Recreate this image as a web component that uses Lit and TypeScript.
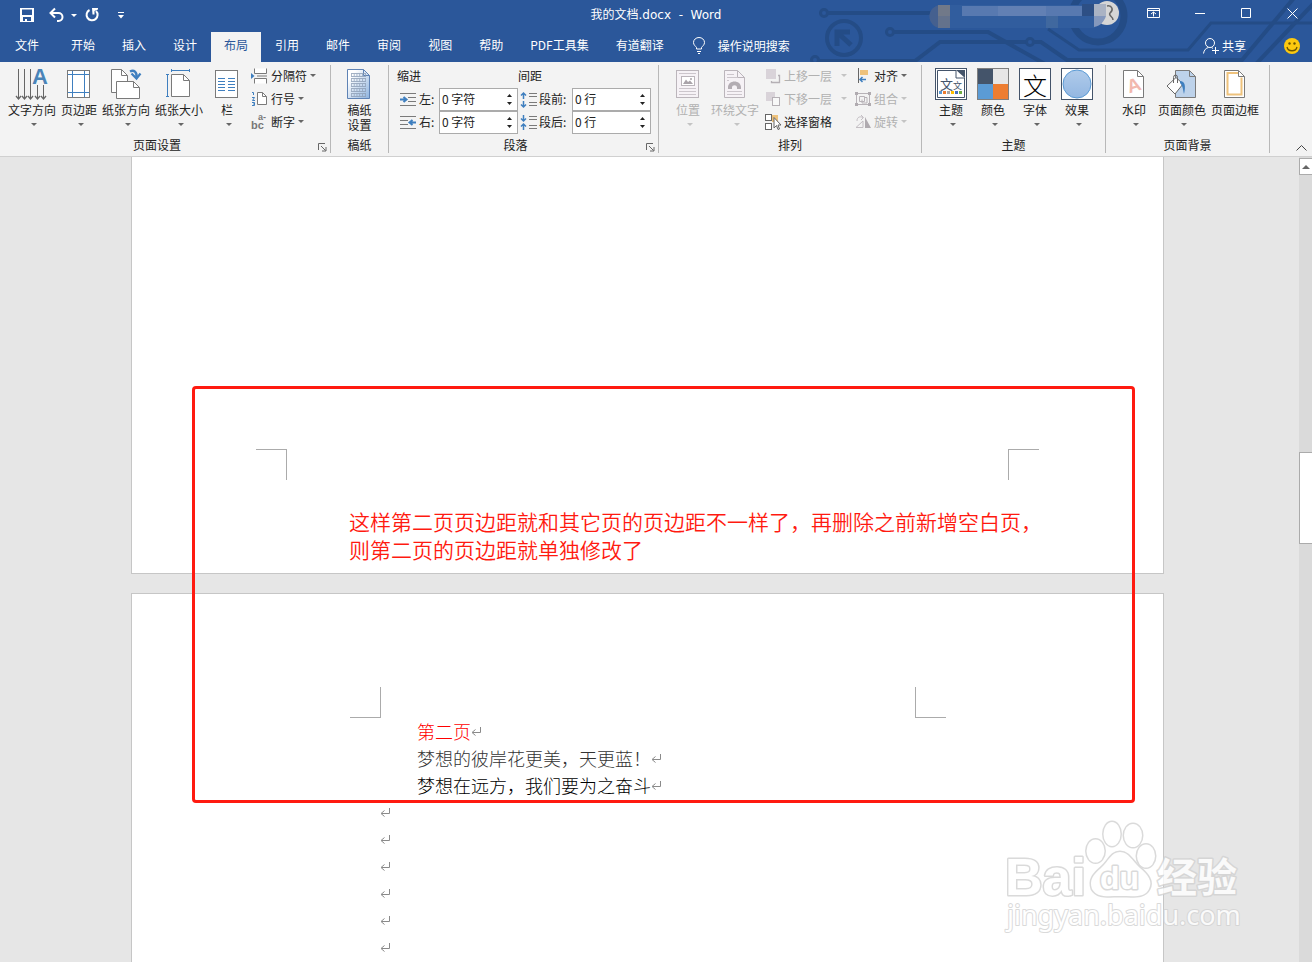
import { LitElement, html, svg, css, nothing, TemplateResult } from "lit";
import { customElement } from "lit/decorators.js";
import { classMap } from "lit/directives/class-map.js";

const icon = (w: number, h: number, body: unknown) =>
  html`<svg width=${w} height=${h} viewBox="0 0 ${w} ${h}" aria-hidden="true">${body}</svg>`;

const caret = (color = "#666") => icon(6, 3, svg`<path d="M0 0H6L3 3Z" fill=${color} />`);
const returnMark = () =>
  icon(11, 11, svg`<path d="M9.500 1V6.500H1.500M4.500 3.500L1 6.500L4.500 9.500" fill="none" stroke="#8a8a8a" />`);

const sheet = (x: number, y: number, w: number, h: number, f: number, stroke = "#7a7a7a", fill = "#fff") => svg`
  <path d="M${x} ${y}H${x + w - f}L${x + w} ${y + f}V${y + h}H${x}Z" fill=${fill} stroke=${stroke} />
  <path d="M${x + w - f} ${y}V${y + f}H${x + w}" fill="none" stroke=${stroke} />`;

const I = {
  save: icon(14, 14, svg`<path fill="#fff" fill-rule="evenodd" d="M0 0H14V14H0ZM2 1.500V7H12V1.500ZM3 9V13H5V11H7V13H11V9Z" />`),
  undo: icon(15, 14, svg`<path d="M2 5H9.500A4 4 0 0 1 9.500 13H8" fill="none" stroke="#fff" stroke-width="2" /><path d="M6 .5L1.500 5L6 9.500" fill="none" stroke="#fff" stroke-width="2" />`),
  redo: icon(14, 14, svg`<path d="M4.500 2A5.500 5.500 0 1 0 11 3" fill="none" stroke="#fff" stroke-width="2" /><path d="M7 0H13V1.500L9.500 3V6.500H7.500Z" fill="#fff" />`),
  custom: icon(6, 7, svg`<path d="M0 .5H6" stroke="#fff" /><path d="M0 3H6L3 6.500Z" fill="#fff" />`),
  bulb: icon(12, 17, svg`<path d="M3.500 12V10.500C2.500 9 .5 8 .5 5.500A5.500 5 0 0 1 11.500 5.500C11.500 8 9.500 9 8.500 10.500V12ZM4 14.500H8M5 16.500H7" fill="none" stroke="#fff" />`),
  share: icon(16, 16, svg`<circle cx="7" cy="5" r="4.500" fill="none" stroke="#fff" /><path d="M.5 15.500C1 12 3 10 5.500 9.500M8.500 9.500L10 10.500M12.500 9V16M9 12.500H16" fill="none" stroke="#fff" />`),
  smile: icon(16, 16, svg`<circle cx="8" cy="8" r="8" fill="#fdc90f" /><circle cx="5.500" cy="5.500" r="1.200" fill="#6b5500" /><circle cx="10.500" cy="5.500" r="1.200" fill="#6b5500" /><path d="M3 9C4 14 12 14 13 9" fill="none" stroke="#6b5500" stroke-width="1.300" />`),
  display: icon(13, 10, svg`<path d="M.5 .5H12.500V9.500H.5ZM.5 2.500H12.500M6.500 8.500V4M4 6L6.500 4L9 6" fill="none" stroke="#fff" />`),
  min: icon(11, 11, svg`<path d="M0 5.500H10" stroke="#fff" />`),
  max: icon(11, 11, svg`<path d="M.5 .5H9.500V9.500H.5Z" fill="none" stroke="#fff" />`),
  close: icon(11, 11, svg`<path d="M.5 .5L10.500 10.500M10.500 .5L.5 10.500" stroke="#fff" />`),

  textDir: icon(32, 32, svg`<path d="M2.500 1V30M8.500 1V30M14.500 1V30M21.500 17V30M27.500 17V30" stroke="#666" />
    <path d="M0 28L2.500 31L5 28M6 28L8.500 31L11 28M12 28L14.500 31L17 28M19 28L21.500 31L24 28M25 28L27.500 31L30 28" fill="none" stroke="#666" stroke-width="1.300" />
    <text x="16" y="16" font-family="Liberation Sans" font-size="22" font-weight="700" fill="#4a84b8">A</text>`),
  margins: icon(24, 32, svg`<rect x=".5" y="2.500" width="22" height="27" fill="#fff" stroke="#7a7a7a" /><path d="M5.500 3V29M17.500 3V29M1 6.500H22M1 24.500H22" stroke="#3f7fbf" />`),
  orient: icon(30, 32, svg`${sheet(0.5, 1.5, 16, 23, 6)}${sheet(5.5, 13.5, 23, 17, 6)}
    <path d="M19 3.500C23 1.500 26 4 25.500 9" fill="none" stroke="#3f7fbf" stroke-width="2.500" /><path d="M20.500 5.500L25.500 10.500L29.500 5.500" fill="none" stroke="#3f7fbf" stroke-width="2.200" />`),
  size: icon(26, 32, svg`${sheet(5.5, 6.5, 18, 22, 6)}<path d="M1.500 6V29M0 6.500H3M0 28.500H3M5 2.500H24M5.500 1V4M23.500 1V4" stroke="#3f7fbf" />`),
  cols: icon(24, 32, svg`<rect x=".5" y="2.500" width="22" height="27" fill="#fff" stroke="#7a7a7a" /><path d="M3 10.500H10M3 13.500H10M3 16.500H10M3 19.500H10M3 22.500H10M13 10.500H20M13 13.500H20M13 16.500H20M13 19.500H20M13 22.500H20" stroke="#3f7fbf" />`),
  breaks: icon(17, 16, svg`<path d="M3.500 .5V5.500H15.500V.5M3.500 15.500V10.500H15.500V15.500" fill="#fff" stroke="#7a7a7a" /><path d="M6 8H16" stroke="#7a7a7a" /><path d="M0 5V11L3.500 8Z" fill="#3f7fbf" />`),
  lines: icon(17, 16, svg`${sheet(6.5, 1.5, 9, 12, 4)}<path d="M1 1.500H2.500V4M1 6.500H3.500L1.500 9.500H4M1 11.500H3.500V14.500H1M2 13H3" fill="none" stroke="#3f7fbf" />`),
  hyphen: icon(17, 16, svg`<g font-family="Liberation Sans" font-weight="700" fill="#777"><text x="0" y="15" font-size="11">bc</text><text x="7" y="6" font-size="9">a-</text></g>`),
  manuscript: icon(24, 32, svg`<defs><linearGradient id="g" x2="1" y2="1"><stop offset="0.200" stop-color="#fff" /><stop offset="1" stop-color="#8cb2de" /></linearGradient></defs>
    ${sheet(0.5, 1.5, 22, 29, 6, "#5f83b5", "url(#g)")}
    ${[5, 10, 15, 20, 25].map((y) => svg`<path d="M4 ${y + 0.5}H19M4 ${y + 3.5}H19" stroke="#8c9db5" stroke-width="0.800" /><path d="M4 ${y + 2}H19" stroke="#8c9db5" stroke-width="2" stroke-dasharray="0.700 2.100" />`)}`),
  indentL: icon(17, 13, svg`<path d="M0 .5H16M8 4.500H16M8 8.500H16M0 12.500H16" stroke="#7a7a7a" /><path d="M0 6.500H6M3.500 4L6.500 6.500L3.500 9" fill="none" stroke="#3f7fbf" stroke-width="2" />`),
  indentR: icon(17, 13, svg`<path d="M0 .5H16M0 4.500H8M0 8.500H8M0 12.500H16" stroke="#7a7a7a" /><path d="M10 6.500H16M12.500 4L9.500 6.500L12.500 9" fill="none" stroke="#3f7fbf" stroke-width="2" />`),
  before: icon(16, 16, svg`<path d="M8 1.500H16M8 4.500H16M8 10.500H16M8 13.500H16" stroke="#7a7a7a" /><path d="M2.500 1V7M2.500 9V15M0 3.500L2.500 1L5 3.500M0 12.500L2.500 15L5 12.500" fill="none" stroke="#3f7fbf" stroke-width="1.500" />`),
  after: icon(16, 16, svg`<path d="M8 1.500H16M8 4.500H16M8 10.500H16M8 13.500H16" stroke="#7a7a7a" /><path d="M2.500 0V6M2.500 9V15M0 3.500L2.500 6L5 3.500M0 11.500L2.500 9L5 11.500" fill="none" stroke="#3f7fbf" stroke-width="1.500" />`),
  position: icon(24, 32, svg`<rect x=".5" y="2.500" width="22" height="27" fill="#f6f2f6" stroke="#bbb5bb" /><path d="M3 5.500H20M3 20.500H20M3 23.500H20M3 26.500H20" stroke="#ccc6cc" /><rect x="5.500" y="8.500" width="13" height="9" fill="#fff" stroke="#bbb5bb" /><path d="M7 16L10 11.500L12 14L14 12.500L17 16Z" fill="#a9a3a9" /><circle cx="15" cy="11" r="1" fill="#a9a3a9" />`),
  wrap: icon(24, 32, svg`${sheet(1.5, 2.5, 20, 27, 7, "#bbb5bb", "#f6f2f6")}<path d="M4 6.500H11M4 9.500H14M4 12.500H6M4 26.500H19M4 23.500H19" stroke="#ccc6cc" /><path d="M5 21V19.500C5 11.500 18 11.500 18 19.500V21H14V19.500C14 16.500 9 16.500 9 19.500V21Z" fill="#b3adb3" />`),
  forward: icon(16, 16, svg`<rect x="1" y="1" width="10" height="10" fill="#d9d3d9" /><path d="M13 7.500H14.500V14.500H6.500V13" fill="none" stroke="#b5b0b5" stroke-width="1.300" />`),
  backward: icon(16, 16, svg`<rect x="1" y="1" width="9" height="9" fill="#d9d3d9" /><rect x="7.500" y="6.500" width="7" height="8" fill="#f8f8f8" stroke="#b5b0b5" />`),
  pane: icon(16, 16, svg`<rect x=".5" y=".5" width="6" height="6" fill="#fff" stroke="#666" /><rect x=".5" y="9.500" width="6" height="6" fill="#fff" stroke="#666" /><path d="M7 1H13V8H7Z" fill="#eec27c" /><path d="M9 3.500V14L11.500 11.500L13 15.500L14.500 15L13 11H16Z" fill="#fff" stroke="#666" />`),
  align: icon(16, 16, svg`<path d="M3.500 0V15" stroke="#666" /><rect x="5" y="2" width="8" height="5" fill="#eec27c" /><path d="M5 11.500H11M7.500 9L5 11.500L7.500 14" fill="none" stroke="#3f7fbf" stroke-width="1.500" />`),
  group: icon(16, 16, svg`<path d="M2 2.500H14M2 13.500H14M1.500 2V14M14.500 2V14M4.500 5.500H9.500V10.500H4.500ZM7 8.500V12H12V6.500H9.500" fill="none" stroke="#b8b3b8" /><path d="M0 1H3V4H0ZM13 1H16V4H13ZM0 12H3V15H0ZM13 12H16V15H13Z" fill="#b0abb0" />`),
  rotate: icon(16, 16, svg`<path d="M1 13.500H8V7Z" fill="none" stroke="#c3bec3" /><path d="M10 3V14H16Z" fill="#b0abb0" /><path d="M2 7C2 3 5 2 8 3.500M6 1L8.500 3.500L6 6" fill="none" stroke="#c3bec3" />`),
  theme: icon(32, 32, svg`<rect x=".5" y=".5" width="31" height="31" fill="#fff" stroke="#44546a" /><path d="M2.500 2.500H21L29.500 10V29.500H2.500Z" fill="#fff" stroke="#44546a" /><path d="M21 2H30V11Z" fill="#44546a" /><path d="M21 2V10H30" fill="#fff" stroke="#44546a" /><g font-family="Noto Sans CJK SC" fill="#44546a"><text x="5" y="21" font-size="13">文</text><text x="18" y="21" font-size="9">文</text></g>
    ${["#5b9bd5", "#ed7d31", "#a5a5a5", "#ffc000", "#4472c4", "#70ad47"].map((c, i) => svg`<rect x=${4 + i * 4} y="23" width="3" height="3" fill=${c} />`)}`),
  colors: icon(32, 32, svg`<path d="M0 0H16V16H0Z" fill="#44546a" /><path d="M16 0H32V16H16Z" fill="#e7e6e6" /><path d="M0 16H16V32H0Z" fill="#5b9bd5" /><path d="M16 16H32V32H16Z" fill="#ed7d31" /><rect x=".5" y=".5" width="31" height="31" fill="none" stroke="#7f7f7f" />`),
  fonts: icon(32, 32, svg`<rect x=".5" y=".5" width="31" height="31" fill="#fff" stroke="#44546a" /><text x="4" y="27" font-family="Noto Sans CJK SC" font-size="24" font-weight="300" fill="#000">文</text>`),
  effects: icon(32, 32, svg`<defs><linearGradient id="e" x2="0" y2="1"><stop offset="0" stop-color="#b0cbea" /><stop offset="1" stop-color="#93b7e2" /></linearGradient></defs><rect x=".5" y=".5" width="31" height="31" fill="#fff" stroke="#44546a" /><circle cx="16" cy="16" r="14" fill="url(#e)" stroke="#5b9bd5" />`),
  watermark: icon(22, 32, svg`${sheet(0.5, 2.5, 20, 27, 6)}<text x="4" y="24" font-family="Liberation Sans" font-size="19" font-weight="700" fill="#f2b8ae" transform="rotate(-18 10 18)">A</text>`),
  pageColor: icon(32, 32, svg`${sheet(9.500, 2.500, 20, 27, 6, "#7a7a7a", "#bdd2ea")}<path d="M1 18L10 9.500L17 16L9 26Z" fill="#fff" stroke="#666" /><path d="M7.500 15V9.500A2 2.500 0 0 1 11.500 9.500V15" fill="none" stroke="#666" /><path d="M14 13C19 13 20 18 18 26C17 22 17 18 14 15Z" fill="#3f7fbf" />`),
  pageBorder: icon(22, 32, svg`${sheet(0.5, 2.5, 20, 27, 6)}<path d="M14 5H3.500V26.500H17.500V9.500" fill="none" stroke="#eec27c" stroke-width="2" />`),
  launch: icon(9, 9, svg`<path d="M.5 7V.5H7M3 3L7.500 7.500M8 4V8H4" fill="none" stroke="#666" />`),
  collapse: icon(11, 6, svg`<path d="M.5 5.500L5.500 .5L10.500 5.500" fill="none" stroke="#444" />`),
  up: icon(8, 4, svg`<path d="M4 0L8 4H0Z" fill="#666" />`),
};

type Big = { label: string; label2?: string; art: TemplateResult; caret?: boolean; off?: boolean; narrow?: boolean };
const big = (b: Big) => html`<button class=${classMap({ big: true, off: !!b.off, narrow: !!b.narrow })}>
  <span class="art">${b.art}</span><span class="label">${b.label}</span>
  ${b.label2 ? html`<span class="label second">${b.label2}</span>` : nothing}
  ${b.caret === false ? nothing : html`<span class="drop">${caret(b.off ? "#c4c4c4" : "#666")}</span>`}
</button>`;
const small = (label: string, art: TemplateResult, off = false, drop = true) =>
  html`<button class=${classMap({ small: true, off })}>${art}<span>${label}</span>${drop ? html`<i>${caret(off ? "#c4c4c4" : "#666")}</i>` : nothing}</button>`;
const spin = (id: string, label: string, value: string, art: TemplateResult) => html`<div class="field">
  ${art}<label for=${id}>${label}:</label>
  <span class="spin"><input id=${id} type="text" .value=${value} />
    <span class="steps"><button aria-label="增加">${icon(5, 3, svg`<path d="M0 3L2.500 0L5 3Z" fill="#222" />`)}</button><button aria-label="减少">${icon(5, 3, svg`<path d="M0 0L2.500 3L5 0Z" fill="#222" />`)}</button></span></span>
</div>`;

@customElement("app-root")
export class AppRoot extends LitElement {
  static styles = css`
    :host { display: flex; flex-direction: column; height: 100vh; overflow: hidden; position: relative; background: #e6e6e6; color: #222;
      font: 12px/16px "Noto Sans CJK SC", sans-serif; }
    * { box-sizing: border-box; }
    svg { display: block; flex: none; overflow: visible; }
    button { appearance: none; border: 0; background: none; padding: 0; margin: 0; font: inherit; color: inherit; }
    i { font-style: normal; }
    .head { position: relative; background: #2b579a; color: #fff; }
    .circuit { position: absolute; top: 0; right: 0; overflow: hidden; }
    .title { position: relative; display: grid; grid-template-columns: 1fr auto 1fr; align-items: center; height: 30px; }
    .quick { display: flex; align-items: center; padding-left: 20px; }
    .undo { margin-left: 15px; }
    .undo-more { margin-left: 7px; }
    .redo { margin-left: 8px; }
    .custom { margin-left: 19px; }
    .name { font-family: "DejaVu Sans", "Noto Sans CJK SC", sans-serif; white-space: pre; line-height: 28px; }
    .window { display: flex; justify-content: flex-end; align-items: center; gap: 35px; padding: 0 14px 4px 0; }
    .tabs { position: relative; display: flex; gap: 1px; height: 32px; padding: 2px 12px 0 2px; }
    .tab { padding: 0 13px 4px; white-space: nowrap; }
    .tab.file { margin-right: 5px; }
    .tab.on { background: #f3f3f3; color: #2b579a; }
    .tell { display: flex; align-items: center; gap: 13px; padding: 0 0 3px 15px; }
    .share { display: flex; align-items: center; gap: 3px; margin-left: auto; padding-bottom: 3px; }
    .share.face { margin-left: 37px; }
    .ribbon { display: flex; background: #f3f3f3; border-bottom: 1px solid #d0d0d0; padding: 3px 0; flex: none; }
    .set { flex: none; display: flex; flex-direction: column; gap: 3px; border-right: 1px solid #b8b8b8; }
    .body { display: flex; height: 69px; }
    .cap { display: grid; grid-template-columns: 1fr; text-align: center; align-items: center; }
    .cap.more { grid-template-columns: 1fr 16px; }
    .cap button { justify-self: end; margin-right: 3px; }
    .cap svg { margin-top: 4px; }
    .page-set .body { padding-left: 8px; gap: 5px; }
    .big { display: flex; flex-direction: column; align-items: center; padding-top: 3px; white-space: nowrap; }
    .big.narrow { width: 38px; }
    .art { margin-bottom: 2px; }
    .label.second { margin-top: -1px; }
    .drop { padding: 5px 0 0 4px; }
    .stack { display: flex; flex-direction: column; align-items: flex-start; }
    .small { display: flex; align-items: center; gap: 3px; height: 23px; padding-bottom: 2px; white-space: nowrap; }
    .off { color: #b1b1b1; }
    .grid-paper .body { justify-content: center; }
    .grid-paper { width: 58px; }
    .page-set { width: 331px; }
    .para { width: 270px; }
    .para .body { padding-left: 8px; }
    .indent { width: 121px; }
    .space { width: 133px; }
    .heading { height: 23px; line-height: 22px; }
    .field { display: flex; align-items: center; height: 23px; padding-left: 3px; gap: 2px; }
    .field label { flex: 1; white-space: nowrap; padding-bottom: 2px; }
    .spin { display: flex; width: 79px; height: 23px; border: 1px solid #ababab; background: #fff; }
    .spin input { flex: 1; min-width: 0; border: 0; padding: 0 0 2px 2px; font: inherit; color: inherit; background: none; outline: 0; }
    .steps { display: flex; flex-direction: column; justify-content: space-around; padding: 2px 5px; }
    .arrange { width: 263px; }
    .arrange .body { padding-left: 12px; }
    .arrange .big.narrow { width: 34px; margin-right: 6px; }
    .layers { margin-left: 6px; }
    .layers i { margin-left: 6px; }
    .aligns { margin-left: 8px; }
    .themes { width: 184px; }
    .themes .body { padding-left: 8px; }
    .themes .big { width: 42px; }
    .bg { width: 164px; }
    .bg .body { padding-left: 8px; gap: 3px; }
    .bg .big { min-width: 50px; }
    .bg .big.narrow { width: 40px; min-width: 0; }
    .fold { display: flex; flex: 1; align-items: flex-end; justify-content: flex-end; padding: 0 5px 2px 0; }
    .work { flex: 1; min-height: 0; display: flex; }
    .pages { flex: 1; min-width: 0; padding: 0 135px 0 131px; display: flex; flex-direction: column; gap: 19px; }
    .sheet { background: #fff; border: 1px solid #c6c6c6; }
    .first { border-top: 0; height: 417px; flex: none; padding: 292px 124px 0; }
    .second-page { flex: 1; min-height: 0; overflow: hidden; border-bottom: 0; padding: 93px 217px 0 218px; }
    .marks { display: flex; justify-content: space-between; }
    .mark { width: 31px; height: 31px; border: 0 solid #ababab; }
    .first .mark { border-top-width: 1px; }
    .second-page .mark { border-bottom-width: 1px; }
    .mark.l { border-right-width: 1px; }
    .mark.r { border-left-width: 1px; }
    .text { padding-left: 30px; }
    p { margin: 0; height: 27px; display: flex; align-items: center; font-size: 18px; line-height: 27px; font-weight: 300; color: #000; }
    .line { padding-left: 37px; }
    .red { color: #f00; }
    .grey { color: #333; }
    .bar { width: 13px; background: #dadada; display: flex; flex-direction: column; }
    .bar-up { height: 17px; margin-top: 1px; background: #fff; border: 1px solid #ababab; border-right: 0; display: flex; align-items: center; justify-content: center; }
    .thumb { margin-top: 277px; height: 92px; background: #fff; border: 1px solid #ababab; border-right: 0; }
    .callout { position: absolute; left: 192px; right: 177px; top: 386px; height: 417px; border: 3px solid #ff1a10; border-radius: 4px; padding: 118px 0 0 154px; color: #ff1a10; font-size: 21px; line-height: 28px; font-weight: 350; }
    .logo { position: absolute; right: 67px; bottom: 20px; }
  `;

  private circuit() {
    return html`<svg class="circuit" width="512" height="62" viewBox="800 0 512 62" aria-hidden="true">
      <g fill="none" stroke="#244c86" stroke-width="4">
        <circle cx="824" cy="13" r="3.500" stroke-width="3" /><path d="M828 13H940" />
        <circle cx="844" cy="38" r="17" /><path d="M837 46V32H850M838 33L851 45" stroke-width="5" />
        <circle cx="890" cy="32" r="3.500" stroke-width="3" /><path d="M894 32H988L1045 64" />
        <circle cx="815" cy="60" r="3.500" stroke-width="3" /><path d="M819 61H915L940 42H1026" />
        <circle cx="1030" cy="42" r="3.500" stroke-width="3" /><path d="M1034 42H1041L1067 60H1242L1294 -2M1256 64L1314 3" />
        <path d="M1048 29L1079 50H1188L1211 23H1312" stroke-width="3" />
        <circle cx="1098" cy="16" r="26" stroke-width="7" />
      </g>
      <circle cx="1107" cy="13" r="12" fill="#d6d6d6" />
      <path d="M1107 6C1112 5 1114 10 1110 13C1108 16 1113 16 1113 20" fill="none" stroke="#666" stroke-width="1.500" />
      <path d="M941 5H1095V28H941A11 11 0 0 1 941 5Z" fill="#315d9e" />
      <path d="M941 5H938V28H941A11 11 0 0 1 941 5Z" fill="#45608f" />
      <path d="M938 5H950V16H938Z" fill="#717989" /><path d="M938 16H950V28H938Z" fill="#64728c" />
      <path d="M962 6H1082V16H962Z" fill="#5879b0" /><path d="M998 6H1046V16H998Z" fill="#6280b4" />
      <path d="M1046 16H1058V28H1046Z" fill="#40689f" /><path d="M1082 4H1094V16H1082Z" fill="#2d4f85" />
      <path d="M1094 4H1106V16H1094Z" fill="#aab3c4" /><path d="M1094 16H1106C1104 22 1100 26 1094 27Z" fill="#8498bd" />
    </svg>`;
  }

  private logo() {
    return html`<svg class="logo" width="240" height="124" viewBox="1005 818 240 124" role="img" aria-label="Baidu 经验">
      <g fill="#fff" stroke="#d2d2d2" stroke-width="3" stroke-linejoin="round" paint-order="stroke" opacity="0.800" font-weight="700">
        <text x="1005" y="895" font-family="Liberation Sans" font-size="52">Bai</text>
        <ellipse cx="1095.500" cy="851" rx="9" ry="11.500" /><ellipse cx="1112" cy="834" rx="8.500" ry="12" />
        <ellipse cx="1133" cy="835.500" rx="9" ry="11.500" /><ellipse cx="1146" cy="856" rx="9" ry="11.500" />
        <path d="M1120 852C1129 852 1132 861 1140 868C1148 875 1153 881 1149 889C1145 898 1134 896 1120 896C1107 896 1097 898 1092 889C1089 880 1093 875 1101 868C1109 861 1111 852 1120 852Z" />
        <text x="1100" y="889" font-family="Liberation Sans" font-size="32">du</text>
        <text x="1157" y="892" font-family="Noto Sans CJK SC" font-size="40">经验</text>
        <text x="1007" y="925" font-family="Noto Sans" font-size="27" font-weight="400" stroke-width="2">jingyan.baidu.com</text>
      </g>
    </svg>`;
  }

  render() {
    const tabs = ["开始", "插入", "设计", "布局", "引用", "邮件", "审阅", "视图", "帮助", "PDF工具集", "有道翻译"];
    return html`
      <header class="head">
        ${this.circuit()}
        <div class="title">
          <div class="quick">
            <button aria-label="保存">${I.save}</button><button class="undo" aria-label="撤消">${I.undo}</button>
            <button class="undo-more" aria-label="撤消选项">${caret("#fff")}</button>
            <button class="redo" aria-label="重复">${I.redo}</button><button class="custom" aria-label="自定义">${I.custom}</button>
          </div>
          <div class="name">我的文档.docx  -  Word</div>
          <div class="window">
            <button aria-label="功能区显示选项">${I.display}</button><button aria-label="最小化">${I.min}</button>
            <button aria-label="最大化">${I.max}</button><button aria-label="关闭">${I.close}</button>
          </div>
        </div>
        <nav class="tabs">
          <button class="tab file">文件</button>
          ${tabs.map((t) => html`<button class=${classMap({ tab: true, on: t === "布局" })}>${t}</button>`)}
          <button class="tell">${I.bulb}<span>操作说明搜索</span></button>
          <button class="share">${I.share}<span>共享</span></button>
          <button class="share face" aria-label="反馈">${I.smile}</button>
        </nav>
      </header>
      <section class="ribbon">
        <div class="set page-set">
          <div class="body">
            ${big({ label: "文字方向", art: I.textDir })}${big({ label: "页边距", art: I.margins })}
            ${big({ label: "纸张方向", art: I.orient })}${big({ label: "纸张大小", art: I.size })}
            ${big({ label: "栏", art: I.cols, narrow: true })}
            <div class="stack">${small("分隔符", I.breaks)}${small("行号", I.lines)}${small("断字", I.hyphen)}</div>
          </div>
          <div class="cap more"><span>页面设置</span><button aria-label="页面设置选项">${I.launch}</button></div>
        </div>
        <div class="set grid-paper">
          <div class="body">${big({ label: "稿纸", label2: "设置", art: I.manuscript, caret: false })}</div>
          <div class="cap"><span>稿纸</span></div>
        </div>
        <div class="set para">
          <div class="body">
            <div class="indent"><div class="heading">缩进</div>${spin("left", "左", "0 字符", I.indentL)}${spin("right", "右", "0 字符", I.indentR)}</div>
            <div class="space"><div class="heading">间距</div>${spin("before", "段前", "0 行", I.before)}${spin("after", "段后", "0 行", I.after)}</div>
          </div>
          <div class="cap more"><span>段落</span><button aria-label="段落选项">${I.launch}</button></div>
        </div>
        <div class="set arrange">
          <div class="body">
            ${big({ label: "位置", art: I.position, off: true, narrow: true })}${big({ label: "环绕文字", art: I.wrap, off: true })}
            <div class="stack layers">${small("上移一层", I.forward, true)}${small("下移一层", I.backward, true)}${small("选择窗格", I.pane, false, false)}</div>
            <div class="stack aligns">${small("对齐", I.align)}${small("组合", I.group, true)}${small("旋转", I.rotate, true)}</div>
          </div>
          <div class="cap"><span>排列</span></div>
        </div>
        <div class="set themes">
          <div class="body">
            ${big({ label: "主题", art: I.theme })}${big({ label: "颜色", art: I.colors })}
            ${big({ label: "字体", art: I.fonts })}${big({ label: "效果", art: I.effects })}
          </div>
          <div class="cap"><span>主题</span></div>
        </div>
        <div class="set bg">
          <div class="body">
            ${big({ label: "水印", art: I.watermark, narrow: true })}${big({ label: "页面颜色", art: I.pageColor })}
            ${big({ label: "页面边框", art: I.pageBorder, caret: false })}
          </div>
          <div class="cap"><span>页面背景</span></div>
        </div>
        <div class="fold"><button aria-label="折叠功能区">${I.collapse}</button></div>
      </section>
      <main class="work">
        <div class="pages">
          <article class="sheet first"><div class="marks"><span class="mark l"></span><span class="mark r"></span></div></article>
          <article class="sheet second-page">
            <div class="marks"><span class="mark l"></span><span class="mark r"></span></div>
            <div class="text">
              <p class="line red">第二页${returnMark()}</p>
              <p class="line grey">梦想的彼岸花更美，天更蓝！${returnMark()}</p>
              <p class="line">梦想在远方，我们要为之奋斗${returnMark()}</p>
              ${[1, 2, 3, 4, 5, 6].map(() => html`<p>${returnMark()}</p>`)}
            </div>
          </article>
        </div>
        <div class="bar"><button class="bar-up" aria-label="向上滚动">${I.up}</button><div class="thumb"></div></div>
      </main>
      <div class="callout">这样第二页页边距就和其它页的页边距不一样了，再删除之前新增空白页，<br />则第二页的页边距就单独修改了</div>
      ${this.logo()}
    `;
  }
}
